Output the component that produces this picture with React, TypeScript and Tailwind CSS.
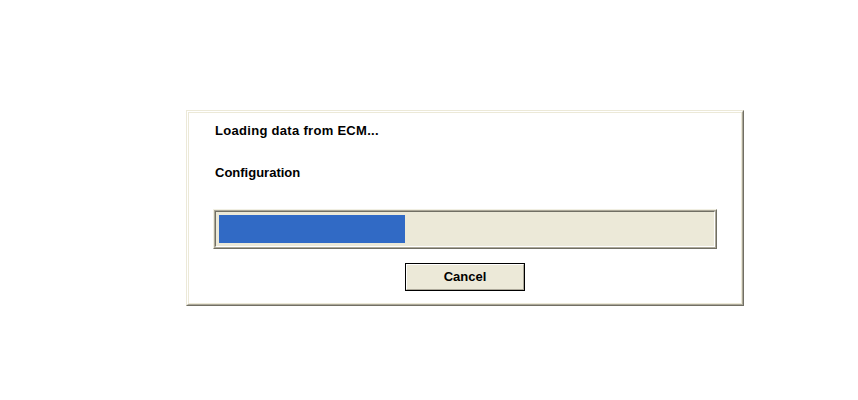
const ProgressDialog = () => {
  const progress = 186; // px filled

  return (
    <div
      className="w-[858px] h-[400px] bg-white pt-[110px] pl-[186px]"
      style={{ fontFamily: '"Liberation Sans", Arial, sans-serif' }}
    >
      {/* Dialog frame */}
      <div className="w-[558px] border border-t-[#ece9d8] border-l-[#ece9d8] border-b-[#716f64] border-r-[#716f64]">
        <div className="border border-t-white border-l-white border-b-[#aca899] border-r-[#aca899]">
          <div className="border border-[#ece9d8] bg-white pt-[10px] pb-[12px]">
            <p className="pl-[26px] text-[13px] leading-[15px] font-bold text-black tracking-[0.3px]">
              Loading data from ECM...
            </p>
            <p className="pl-[26px] mt-[27px] text-[13px] leading-[15px] font-bold text-black">
              Configuration
            </p>

            {/* Progress bar */}
            <div className="ml-[24px] mt-[29px] w-[504px] border border-t-[#f1efe2] border-l-[#f1efe2] border-b-[#716f64] border-r-[#716f64]">
              <div className="border border-[#aca899]">
                <div className="border border-t-[#716f64] border-l-[#716f64] border-b-white border-r-white bg-[#ece9d8] p-[3px]">
                  <div className="h-[28px]">
                    <div className="h-full bg-[#316ac5]" style={{ width: progress }} />
                  </div>
                </div>
              </div>
            </div>

            <div className="mt-[14px] flex justify-center">
              <button className="w-[120px] h-[28px] border border-black bg-[#ece9d8] p-0">
                <span className="flex h-full w-full items-center justify-center border border-t-white border-l-white border-b-[#aca899] border-r-[#aca899] text-[13px] font-bold text-black">
                  Cancel
                </span>
              </button>
            </div>
          </div>
        </div>
      </div>
    </div>
  );
};

export default function App() {
  return <ProgressDialog />;
}
